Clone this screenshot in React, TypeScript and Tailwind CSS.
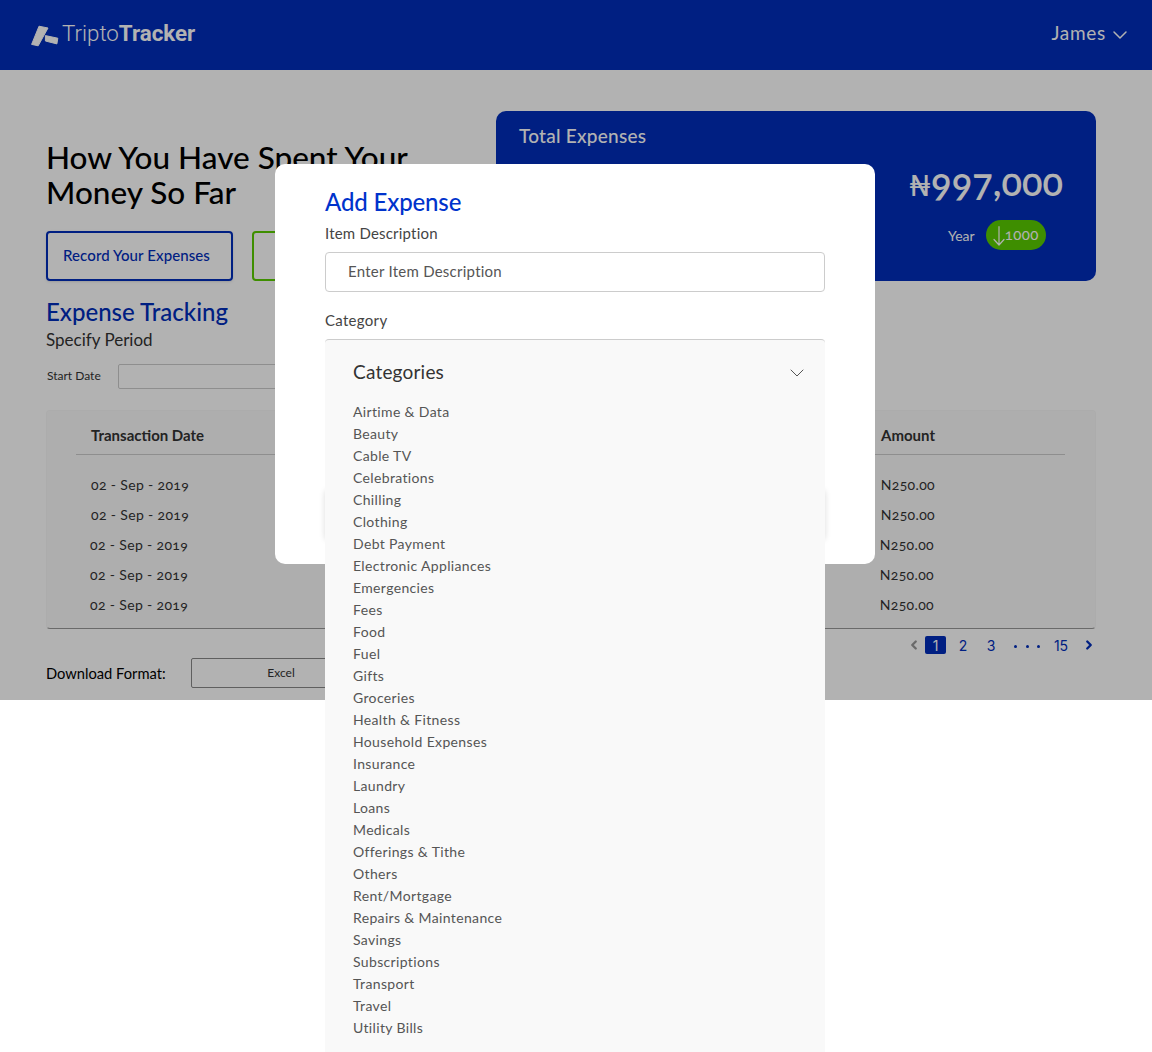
import React from "react";
import { ChevronDown, ChevronLeft, ChevronRight } from "lucide-react";

const cats = ["Airtime & Data","Beauty","Cable TV","Celebrations","Chilling","Clothing","Debt Payment","Electronic Appliances","Emergencies","Fees","Food","Fuel","Gifts","Groceries","Health & Fitness","Household Expenses","Insurance","Laundry","Loans","Medicals","Offerings & Tithe","Others","Rent/Mortgage","Repairs & Maintenance","Savings","Subscriptions","Transport","Travel","Utility Bills"];

function Row({ shift }: { shift: boolean }) {
  return (
    <div className="flex justify-between h-[30px] items-center text-[14px] tracking-[0.35px] text-[#333] oldstyle-nums">
      <span className={shift ? "ml-[14px]" : "ml-[15px]"}>02 - Sep - 2019</span>
      <span className={shift ? "mr-[131px]" : "mr-[130px]"}>N250.00</span>
    </div>
  );
}

export default function App() {
  return (
    <div className="relative h-[1052px] overflow-hidden bg-white font-['Lato','Liberation_Sans',sans-serif]">
      <div className="relative h-[700px] bg-white">
        <header className="h-[70px] bg-[#002dbb] flex items-center justify-between pl-[31px] pr-[20px]">
          <div className="flex items-center gap-[2px] text-white font-['Roboto',sans-serif] text-[22.3px]">
            <svg width="29" height="22" viewBox="0 0 29 22" className="mt-[1px]">
              <path d="M8 1.2 L17 3 L7.2 20.8 L0.6 19.4 Z" fill="white" stroke="white" strokeWidth="1" strokeLinejoin="round" />
              <path d="M14.4 10.6 L26.8 13.2 L25.9 18.9 L14.4 16 Z" fill="white" stroke="white" strokeWidth="1" strokeLinejoin="round" />
            </svg>
            <span className="font-light pb-[3px]">Tripto<span className="font-bold">Tracker</span></span>
          </div>
          <div className="flex items-center gap-[2px] text-white">
            <span className="text-[19px] tracking-[0.7px] pb-[3px]">James</span>
            <ChevronDown size={24} strokeWidth={1.5} />
          </div>
        </header>
        <div className="flex pl-[46px] pr-[56px] pt-[41px] gap-[15px]">
          <div className="w-[435px] shrink-0">
            <h1 className="mt-[29px] text-[31.5px] leading-[35px] font-medium text-black whitespace-nowrap">How You Have Spent Your<br />Money So Far</h1>
            <div className="flex gap-[19px] mt-[21px]">
              <button className="w-[187px] h-[50px] pb-[2px] pr-[6px] rounded-[4px] border-2 border-[#002dbb] text-[15px] tracking-[0.1px] font-medium text-[#002dbb] shadow-sm">Record Your Expenses</button>
              <button className="w-[187px] h-[50px] rounded-[4px] border-2 border-[#5acc00]" />
            </div>
          </div>
          <section className="flex-1 h-[170px] rounded-[10px] bg-[#002dbb] text-white relative">
            <div className="pl-[23px] pt-[11px] text-[19px] tracking-[0.25px] font-medium">Total Expenses</div>
            <div className="absolute right-[33px] top-[49px] text-[38px] font-semibold leading-[42px] oldstyle-nums flex items-baseline"><span className="text-[28px]">₦</span>997,000</div>
            <div className="absolute left-[452px] top-[109px] flex items-center gap-[11px]">
              <span className="text-[14px]">Year</span>
              <span className="h-[30px] w-[60px] rounded-full bg-[#5acc00] flex items-center justify-center text-[15px] tracking-[0.4px] oldstyle-nums">
                <svg width="12" height="20" viewBox="0 0 12 20" fill="none" stroke="white" strokeWidth="1.2" strokeLinecap="round" strokeLinejoin="round" className="mt-[1px]">
                  <path d="M6 0.7 V19 M1 13.5 L6 19 L11 13.5" />
                </svg>
                <span className="pb-[1px]">1000</span>
              </span>
            </div>
          </section>
        </div>
        <div className="pl-[46px] pr-[56px]">
          <h2 className="mt-[16px] text-[24px] leading-[30px] font-medium text-[#002dbb]">Expense Tracking</h2>
          <p className="mt-[1px] text-[17px] leading-[24px] text-[#333]">Specify Period</p>
          <div className="mt-[12px] flex items-center h-[25px]">
            <span className="text-[12px] w-[72px] pl-[1px] pb-[2px] text-[#333]">Start Date</span>
            <div className="w-[260px] h-[25px] rounded-[2px] border border-[#ccc]" />
          </div>
          <div className="mt-[21px] h-[219px] rounded-[4px] border border-[#f6f6f6] border-b-[#999] bg-[#fafafa] pl-[29px] pr-[30px]">
            <div className="flex justify-between h-[44px] items-end pb-[8px] border-b border-[#ccc] text-[15px] font-bold text-[#333]">
              <span className="ml-[15px]">Transaction Date</span>
              <span className="mr-[130px]">Amount</span>
            </div>
            <div className="pt-[14px]">
              <Row shift={false} />
              <Row shift={false} />
              <Row shift />
              <Row shift />
              <Row shift />
            </div>
          </div>
          <div className="flex justify-between">
            <div className="flex items-center mt-[29px]">
              <span className="w-[145px] text-[14.7px] text-black">Download Format:</span>
              <button className="w-[180px] h-[30px] rounded-[2px] border border-[#888] text-[12px] text-[#333]">Excel</button>
            </div>
            <div className="flex items-center h-[18px] mt-[7px] text-[14px] text-[#002dbb] font-['Inter',sans-serif]">
              <ChevronLeft size={14} strokeWidth={4} className="text-[#999] mr-[4px]" />
              <span className="w-[21px] h-[18px] rounded-[2px] bg-[#002dbb] text-white flex items-center justify-center">1</span>
              <span className="w-[34px] text-center">2</span>
              <span className="w-[22px] text-center">3</span>
              <span className="w-[50px] px-[12px] flex justify-between items-center pt-[3px]">
                <i className="block w-[3px] h-[3px] rounded-full bg-[#002dbb]" />
                <i className="block w-[3px] h-[3px] rounded-full bg-[#002dbb]" />
                <i className="block w-[3px] h-[3px] rounded-full bg-[#002dbb]" />
              </span>
              <span className="w-[18px] text-center">15</span>
              <ChevronRight size={14} strokeWidth={4} className="ml-[12px]" />
            </div>
          </div>
        </div>
        <div className="absolute inset-0 bg-black/30" />
      </div>

      <div className="absolute left-[275px] top-[164px] w-[600px] h-[400px] rounded-[10px] bg-white px-[50px] pt-[23px]">
        <h3 className="text-[24px] leading-[30px] font-medium text-[#0033cc] tracking-[-0.15px]">Add Expense</h3>
        <label className="block mt-[6px] text-[15px] tracking-[0.2px] leading-[20px] text-[#444]">Item Description</label>
        <div className="mt-[9px] h-[40px] pb-[2px] rounded-[4px] border border-[#ccc] pl-[22px] flex items-center text-[15px] tracking-[0.25px] text-[#555]">Enter Item Description</div>
        <label className="block mt-[18px] text-[15px] tracking-[0.3px] leading-[20px] text-[#444]">Category</label>
        <div className="mt-[8px] h-[50px]" />
        <div className="mt-[102px] h-[50px] rounded-[4px] shadow-[0_0_6px_rgba(0,0,0,0.14)]" />
      </div>

      <div className="absolute left-[325px] top-[339px] w-[500px] h-[713px] rounded-t-[4px] border-t border-[#ccc] bg-[#f9f9f9] pl-[28px] pr-[16px]">
        <div className="flex items-center justify-between h-[65px] text-[#333] text-[19px] tracking-[0.2px]">
          <span>Categories</span>
          <ChevronDown size={24} strokeWidth={1} className="text-[#555]" />
        </div>
        <ul className="text-[14px] tracking-[0.35px] leading-[22px] text-[#555] -mt-[4px]">
          {cats.map((c) => (
            <li key={c}>{c}</li>
          ))}
        </ul>
      </div>
    </div>
  );
}
